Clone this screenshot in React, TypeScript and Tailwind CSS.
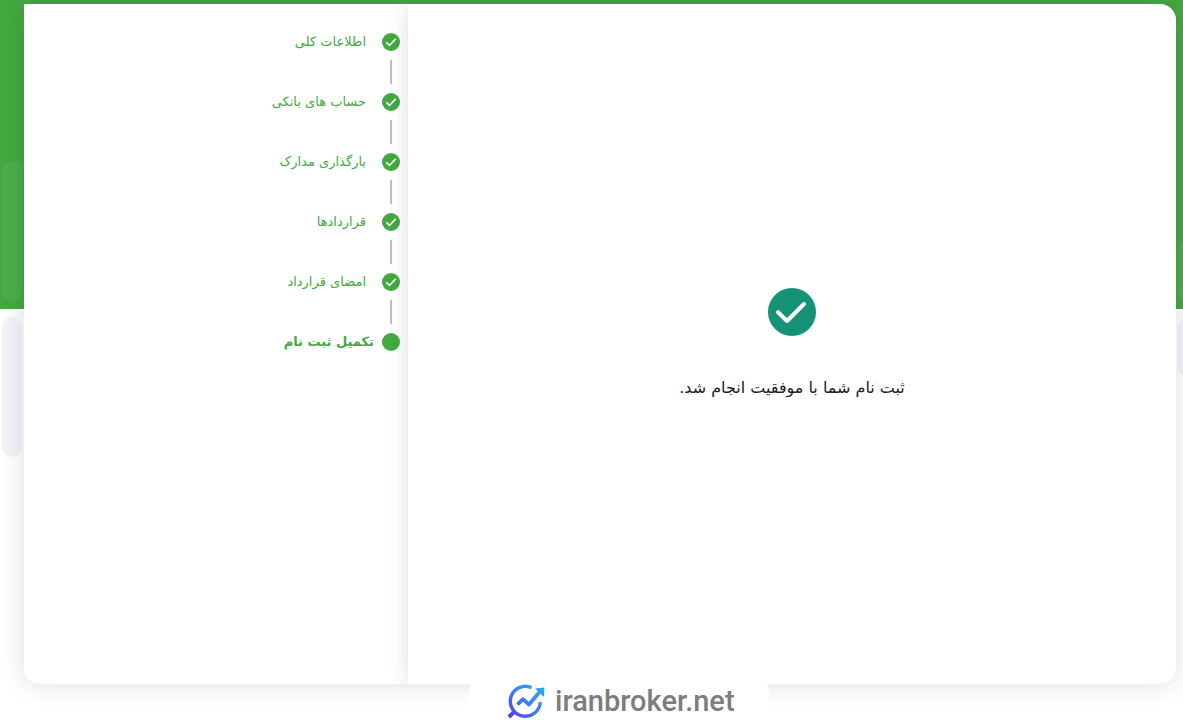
type Step = { id: string; title: string; done: boolean };

const steps: Step[] = [
  { id: "general", title: "اطلاعات کلی", done: true },
  { id: "accounts", title: "حساب های بانکی", done: true },
  { id: "documents", title: "بارگذاری مدارک", done: true },
  { id: "contracts", title: "قراردادها", done: true },
  { id: "signature", title: "امضای قرارداد", done: true },
  { id: "complete", title: "تکمیل ثبت نام", done: false },
];

function StepDot({ done }: { done: boolean }) {
  return (
    <svg viewBox="0 0 18 18" className="size-[18px] shrink-0" aria-hidden="true">
      <circle cx="9" cy="9" r="9" fill="#43a940" />
      {done && <path d="M4.3 9.2 7.5 12.3 13.8 5.8" fill="none" stroke="#fff" strokeWidth="1.6" />}
    </svg>
  );
}

function Stepper() {
  return (
    <ol className="flex flex-col px-2 pt-5">
      {steps.map((step, i) => (
        <li key={step.id}>
          {i > 0 && <div className="ms-2 h-6 w-0.5 bg-[#bdbdbd]" />}
          <div
            className={`flex h-9 items-center text-[13px] text-[#43a940] ${
              step.done ? "gap-4" : "gap-2 font-bold"
            }`}
          >
            <StepDot done={step.done} />
            <span>{step.title}</span>
          </div>
        </li>
      ))}
    </ol>
  );
}

function SuccessIcon() {
  return (
    <svg viewBox="0 0 48 48" className="size-12" aria-hidden="true">
      <circle cx="24" cy="24" r="24" fill="#169276" />
      <path
        d="M10 24.2 19 33 36 16"
        fill="none"
        stroke="#fff"
        strokeWidth="4"
        strokeLinecap="round"
        strokeLinejoin="round"
      />
    </svg>
  );
}

function BrandLogo() {
  return (
    <svg viewBox="0 0 38 36" className="h-9 w-[38px] shrink-0" fill="none" aria-hidden="true">
      <defs>
        <linearGradient id="brand" x1="6" y1="34" x2="32" y2="3" gradientUnits="userSpaceOnUse">
          <stop stopColor="#5540f5" />
          <stop offset="0.5" stopColor="#3f7cf5" />
          <stop offset="1" stopColor="#2ba6ea" />
        </linearGradient>
      </defs>
      <g stroke="url(#brand)">
        <path d="M24.5 3.6A15 15 0 1 0 33.3 18" strokeWidth="3.4" />
        <path d="M7.5 27.5 1.8 33" strokeWidth="4" />
        <path d="M10.5 20.5 16 15.2 22 20.5 33 7.5" strokeWidth="3.8" strokeLinejoin="round" />
      </g>
      <path d="M28 4.6 37.5 3.5 37 13Z" fill="url(#brand)" />
    </svg>
  );
}

function Backdrop() {
  return (
    <div className="absolute inset-0 -z-10 overflow-hidden" aria-hidden="true">
      <div className="h-[309px] bg-[#43a940]" />
      <div className="absolute top-[161px] left-0.5 h-[140px] w-5 rounded-full bg-white/5" />
      <div className="absolute top-[317px] left-0.5 h-[140px] w-5 rounded-full bg-[#f3f3f9]" />
      <div className="absolute top-[241px] -right-[15px] h-[60px] w-5 rounded-full bg-white/5" />
      <div className="absolute top-[317px] -right-[15px] h-[60px] w-5 rounded-full bg-[#f3f3f9]" />
    </div>
  );
}

export default function App() {
  return (
    <div
      dir="rtl"
      className="relative isolate flex min-h-screen flex-col bg-white pt-1 pr-[7px] pb-9 pl-6 font-['DejaVu_Sans',sans-serif]"
    >
      <Backdrop />
      <div className="flex flex-1 rounded-2xl rounded-tl-none bg-white shadow-[0_0_24px_rgba(30,35,60,0.16)]">
        <main className="flex flex-2 flex-col items-center justify-center gap-10 rounded-r-2xl bg-white shadow-[0_0_20px_rgba(30,35,50,0.15)] [clip-path:inset(0_0_0_-24px_round_16px)]">
          <SuccessIcon />
          <p className="text-base text-[#212121]">ثبت نام شما با موفقیت انجام شد.</p>
        </main>
        <aside className="flex-1">
          <Stepper />
        </aside>
      </div>
      <footer className="absolute inset-x-0 bottom-0 flex justify-center pl-[55px]">
        <a
          href="#"
          dir="ltr"
          className="flex h-11 w-[300px] items-center gap-2.5 rounded-t-2xl bg-white pt-2 pl-[38px] font-['Roboto',sans-serif] text-[29px] font-medium text-[#7d7d7d]"
        >
          <BrandLogo />
          <span>iranbroker.net</span>
        </a>
      </footer>
    </div>
  );
}
